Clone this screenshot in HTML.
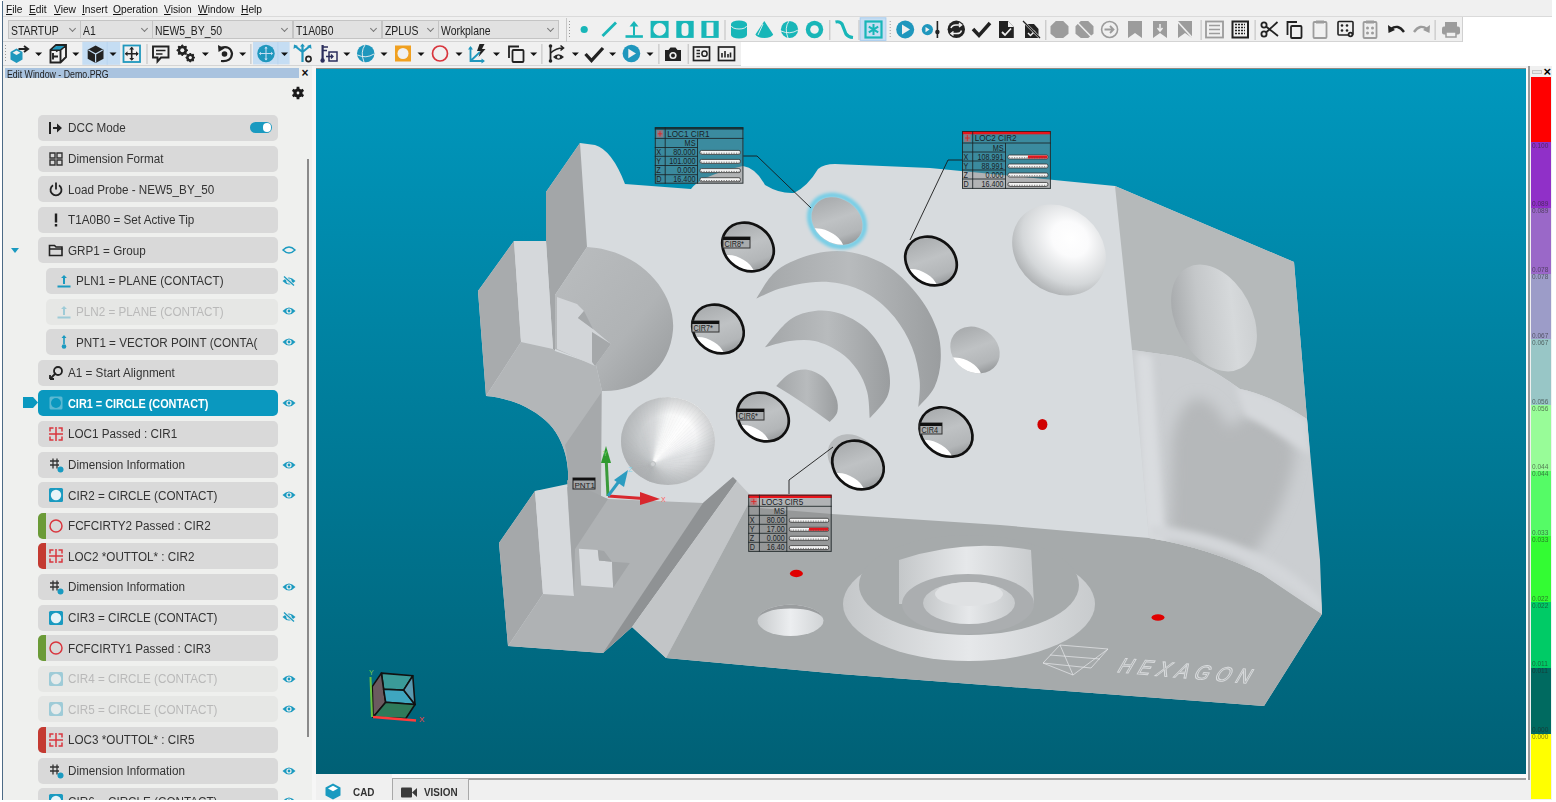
<!DOCTYPE html><html><head><meta charset="utf-8"><style>
*{box-sizing:border-box}
html{width:1556px;height:802px;overflow:hidden}
body{margin:0;width:1556px;height:802px;position:relative;overflow:hidden;background:#fff;font-family:"Liberation Sans",sans-serif;color:#222}
.a{position:absolute}
#root{position:absolute;left:0;top:0;width:1556px;height:802px;overflow:hidden}
#menu{left:3px;top:0;width:1549px;height:17px;background:#f0f0f0;border-bottom:1px solid #dadada}
#menu span{position:absolute;top:3px;font-size:11px;color:#111;white-space:nowrap;transform:scaleX(.93);transform-origin:0 0}
#menu u{text-decoration:underline;text-underline-offset:1px}
#lborder{left:2px;top:1px;width:1px;height:799px;background:#4d6b86}
#tb1{left:3px;top:17px;width:1460px;height:25px;background:#f0f0f0;border-bottom:1px solid #d4d4d4}
#tb2{left:3px;top:42px;width:738px;height:24px;background:#f0f0f0;border-bottom:1px solid #d4d4d4}
.combo{position:absolute;top:3px;height:19px;background:#e1e1e1;border:1px solid #c4c4c4;font-size:13px;color:#222;overflow:hidden}
.combo span{position:absolute;left:2px;top:1.5px;transform:scaleX(.8);transform-origin:0 0;white-space:nowrap}
.combo i{position:absolute;right:5px;top:5px;width:5px;height:5px;border-right:1px solid #777;border-bottom:1px solid #777;transform:rotate(45deg)}
#panel{left:3px;top:66px;width:313px;height:734px;background:#eff0ee}
#ptitle{left:5px;top:68px;width:294px;height:10px;background:#a9c3df;font-size:10px;color:#222;padding-left:1.5px;line-height:11px;white-space:nowrap}
#ptitle span{display:inline-block;transform:scaleX(.88);transform-origin:0 0;position:relative;top:0.5px}
.row{position:absolute;left:38px;width:240px;height:26px;background:#d9d9d9;border-radius:5px;font-size:12.5px;color:#333;white-space:nowrap;overflow:hidden}
.row .t{position:absolute;left:30px;top:6.5px;transform:scaleX(.935);transform-origin:0 0}
.row.ind{left:46px;width:232px}
.row.fade{background:#e6e7e5;color:#b9b9b9}
.row.sel{background:#0a98bf;color:#fff;font-weight:bold}
.row.sel .t{transform:scaleX(.87)}
.bar{position:absolute;left:0;top:0;width:8px;height:26px}
.row svg{position:absolute;left:10px;top:5px}
#vp{left:316px;top:68px;width:1210px;height:706px;background:linear-gradient(#0098be,#006075);border-top:1px solid #8f8a80;overflow:hidden}
#tabs{left:316px;top:774px;width:1212px;height:26px;background:#f0f0f0}
#cbar{left:1528px;top:66px;width:24px;height:734px;background:#f0f0f0}
svg{display:block}
</style></head><body><div id="root">
<div id="lborder" class="a"></div>
<div id="menu" class="a">
<span style="left:3px"><u>F</u>ile</span>
<span style="left:26px"><u>E</u>dit</span>
<span style="left:51px"><u>V</u>iew</span>
<span style="left:79px"><u>I</u>nsert</span>
<span style="left:110px"><u>O</u>peration</span>
<span style="left:161px"><u>V</u>ision</span>
<span style="left:195px"><u>W</u>indow</span>
<span style="left:238px"><u>H</u>elp</span>
</div>
<div id="tb1" class="a">
<div class="combo" style="left:5px;width:73px"><span>STARTUP</span><i></i></div>
<div class="combo" style="left:77px;width:73px"><span>A1</span><i></i></div>
<div class="combo" style="left:149px;width:141px"><span>NEW5_BY_50</span><i></i></div>
<div class="combo" style="left:290px;width:89px"><span>T1A0B0</span><i></i></div>
<div class="combo" style="left:378.5px;width:57px"><span>ZPLUS</span><i></i></div>
<div class="combo" style="left:435px;width:120.5px"><span>Workplane</span><i></i></div>
</div>
<div id="tb2" class="a"></div>
<svg class="a" style="left:0;top:0" width="1556" height="68" viewBox="0 0 1556 68">
<rect x="566" y="18" width="1" height="24" fill="#c8c8c8"/>
<rect x="569" y="21" width="1" height="1" fill="#9a9a9a"/><rect x="569" y="24" width="1" height="1" fill="#9a9a9a"/><rect x="569" y="27" width="1" height="1" fill="#9a9a9a"/><rect x="569" y="30" width="1" height="1" fill="#9a9a9a"/><rect x="569" y="33" width="1" height="1" fill="#9a9a9a"/><rect x="569" y="36" width="1" height="1" fill="#9a9a9a"/>
<circle cx="584.2" cy="29.5" r="3.6" fill="#18b6b8"/>
<path d="M602.5,36 L616,22.5" stroke="#18b6b8" stroke-width="2.8"/>
<rect x="625.5" y="35.2" width="17.4" height="2.6" fill="#18b6b8"/><rect x="633" y="25" width="2" height="10.5" fill="#18b6b8"/><path d="M629.5,26.5 L634,21 L638.5,26.5 Z" fill="#18b6b8"/>
<rect x="650.6" y="20.9" width="18" height="17" fill="#18b6b8"/><circle cx="659.6" cy="29.4" r="6.3" fill="#f0f0f0"/>
<rect x="676.3" y="20.9" width="17.4" height="17" fill="#18b6b8"/><rect x="681.5" y="23" width="7" height="13" rx="3.5" fill="#f0f0f0"/>
<rect x="701.4" y="20.9" width="17.3" height="17" fill="#18b6b8"/><rect x="706.5" y="22.5" width="7" height="13.5" fill="#f0f0f0"/>
<rect x="724.5" y="20" width="1" height="20" fill="#bdbdbd"/>
<path d="M731,24 A8,3.5 0 0 1 747,24 V35 A8,3.5 0 0 1 731,35 Z" fill="#18b6b8"/><path d="M731.5,26 A7.5,3 0 0 0 746.5,26" stroke="#f0f0f0" stroke-width="0.9" fill="none"/>
<path d="M764.3,21 L773.2,34.5 A9,4 0 0 1 755.4,34.5 Z" fill="#18b6b8"/><path d="M763,24 L758,35" stroke="#f0f0f0" stroke-width="0.9"/>
<circle cx="789.5" cy="29.5" r="8.6" fill="#18b6b8"/><path d="M781,31 Q790,35 798,30 M789,21 Q784,28 788,38" stroke="#f0f0f0" stroke-width="0.9" fill="none"/>
<circle cx="814.5" cy="29.5" r="8.7" fill="#18b6b8"/><circle cx="814.5" cy="29.5" r="4.3" fill="#f0f0f0"/>
<rect x="829.3" y="20" width="1" height="20" fill="#bdbdbd"/>
<path d="M835.5,22 Q840,21 842,24 L846,34 Q848,37 853,37.5" stroke="#18b6b8" stroke-width="3.2" fill="none"/>
<rect x="858.5" y="20" width="1" height="20" fill="#bdbdbd"/>
<rect x="860.2" y="17.8" width="25.7" height="22.6" fill="#c7def3" stroke="#a9cdee" stroke-width="1"/>
<rect x="865.5" y="21.5" width="16" height="16" fill="none" stroke="#18b6b8" stroke-width="2.2"/><path d="M873.5,24 V35 M868.8,26.7 L878.2,32.3 M878.2,26.7 L868.8,32.3" stroke="#18b6b8" stroke-width="2"/>
<rect x="889.7" y="21" width="1" height="1" fill="#9a9a9a"/><rect x="889.7" y="24" width="1" height="1" fill="#9a9a9a"/><rect x="889.7" y="27" width="1" height="1" fill="#9a9a9a"/><rect x="889.7" y="30" width="1" height="1" fill="#9a9a9a"/><rect x="889.7" y="33" width="1" height="1" fill="#9a9a9a"/><rect x="889.7" y="36" width="1" height="1" fill="#9a9a9a"/>
<circle cx="905.2" cy="29.5" r="9" fill="#1f97bd"/><path d="M902,24.5 L910,29.5 L902,34.5 Z" fill="#f0f0f0"/>
<circle cx="927.4" cy="29.6" r="5.6" fill="#1f97bd"/><path d="M925.5,27 L929.5,29.6 L925.5,32.2 Z" fill="#f0f0f0"/><rect x="936.6" y="21" width="1.6" height="17" fill="#222222"/><circle cx="937.4" cy="32" r="2.2" fill="#222222"/>
<circle cx="956.3" cy="29.3" r="8.7" fill="#222222"/><path d="M951,28 Q952,24.5 957,25 H961 M959,23 L961.5,25 L959,27 M961.5,30.5 Q960.5,34 955.5,33.5 H951 M953.5,31.5 L951,33.5 L953.5,35.5" stroke="#f0f0f0" stroke-width="1.5" fill="none"/>
<path d="M973,29 L979,35.5 L990,23" stroke="#222222" stroke-width="3.5" fill="none"/>
<path d="M999,21 H1008 L1013.8,27 V38 H999 Z" fill="#222222"/><path d="M1008,21 V27 H1013.8" fill="#f0f0f0"/><path d="M1002,32 L1005,35 L1011,28.5" stroke="#f0f0f0" stroke-width="1.8" fill="none"/>
<path d="M1025,24 H1034 L1038.5,29 V38 H1025 Z" fill="#222222"/><path d="M1028,33 L1030.5,35.5 L1035,31" stroke="#f0f0f0" stroke-width="1.5" fill="none"/><path d="M1023,21 L1040,38" stroke="#f0f0f0" stroke-width="2.4"/><path d="M1023,21 L1040,38" stroke="#222222" stroke-width="1.3"/>
<rect x="1045.3" y="20" width="1" height="20" fill="#bdbdbd"/>
<path d="M1055.8,21 H1063.2 L1068.5,26.3 V33.7 L1063.2,38 H1055.8 L1050.5,33.7 V26.3 Z" fill="#9c9c9c"/>
<path d="M1080.8,21 H1088.2 L1093.5,26.3 V33.7 L1088.2,38 H1080.8 L1075.5,33.7 V26.3 Z" fill="#9c9c9c"/><path d="M1076,21 L1093,38.5" stroke="#f0f0f0" stroke-width="1.5"/>
<circle cx="1109.6" cy="29.5" r="8" fill="none" stroke="#9c9c9c" stroke-width="1.6"/><path d="M1104.5,29.5 H1113 M1110,26 L1113.5,29.5 L1110,33" stroke="#9c9c9c" stroke-width="1.8" fill="none"/>
<path d="M1128,21 H1142 V38 L1135,33 L1128,38 Z" fill="#9c9c9c"/>
<path d="M1153,21 H1167 V38 L1160,33 L1153,38 Z" fill="#9c9c9c"/><path d="M1160,24 V30 M1157.5,28 L1160,31 L1162.5,28" stroke="#f0f0f0" stroke-width="1.5" fill="none"/>
<path d="M1178,21 H1192 V38 L1185,33 L1178,38 Z" fill="#9c9c9c"/><path d="M1177,21 L1193,38.5" stroke="#f0f0f0" stroke-width="1.6"/>
<rect x="1200.6" y="20" width="1" height="20" fill="#bdbdbd"/>
<rect x="1206" y="21.5" width="17" height="16" fill="none" stroke="#9c9c9c" stroke-width="1.8"/><path d="M1209,25.5 H1220 M1209,29.5 H1220 M1209,33.5 H1220" stroke="#9c9c9c" stroke-width="1.6"/>
<rect x="1232.5" y="21.5" width="15.5" height="16" fill="none" stroke="#222222" stroke-width="2"/><path d="M1235,24.5 H1245 M1235,27.5 H1245 M1235,30.5 H1245 M1235,33.5 H1245" stroke="#222222" stroke-width="1.4" stroke-dasharray="2 1"/>
<rect x="1254.6" y="20" width="1" height="20" fill="#bdbdbd"/>
<circle cx="1264" cy="25" r="2.6" fill="none" stroke="#222222" stroke-width="1.8"/><circle cx="1264" cy="34" r="2.6" fill="none" stroke="#222222" stroke-width="1.8"/><path d="M1266,26.5 L1278,36 M1266,32.5 L1277.5,22" stroke="#222222" stroke-width="1.8"/>
<path d="M1287.5,35 V22 H1297" fill="none" stroke="#222222" stroke-width="1.8"/><rect x="1291" y="26" width="10.5" height="12" rx="1" fill="none" stroke="#222222" stroke-width="1.8"/>
<rect x="1313.5" y="22" width="13" height="16" rx="1" fill="none" stroke="#9c9c9c" stroke-width="1.8"/><rect x="1316" y="20.5" width="8" height="3" fill="#9c9c9c"/>
<rect x="1338" y="21.5" width="15" height="13.5" rx="1" fill="none" stroke="#222222" stroke-width="1.6"/><circle cx="1342" cy="25.5" r="1.3" fill="#222222"/><circle cx="1347" cy="25.5" r="1.3" fill="#222222"/><circle cx="1342" cy="30.5" r="1.3" fill="#222222"/><circle cx="1347" cy="30.5" r="1.3" fill="#222222"/><circle cx="1350.5" cy="34.5" r="2.8" fill="#222222"/><circle cx="1350.5" cy="34.5" r="1" fill="#f0f0f0"/>
<rect x="1363.5" y="22" width="13" height="16" rx="1" fill="none" stroke="#9c9c9c" stroke-width="1.8"/><rect x="1366" y="20.5" width="8" height="3" fill="#9c9c9c"/><circle cx="1367.5" cy="28" r="1.5" fill="#9c9c9c"/><circle cx="1372.5" cy="28" r="1.5" fill="#9c9c9c"/><circle cx="1367.5" cy="33" r="1.5" fill="#9c9c9c"/><circle cx="1372.5" cy="33" r="1.5" fill="#9c9c9c"/>
<path d="M1391,29 Q1398,23.5 1404,32" stroke="#222222" stroke-width="2.4" fill="none"/><path d="M1388,25 L1388.5,33 L1395,30 Z" fill="#222222"/>
<path d="M1427,29 Q1420,23.5 1414,32" stroke="#9c9c9c" stroke-width="2.4" fill="none"/><path d="M1430,25 L1429.5,33 L1423,30 Z" fill="#9c9c9c"/>
<rect x="1434.6" y="20" width="1" height="20" fill="#bdbdbd"/>
<rect x="1445" y="22" width="12" height="5" fill="#9c9c9c"/><rect x="1442" y="26.5" width="18" height="8" rx="2" fill="#9c9c9c"/><rect x="1446" y="32" width="10" height="5" fill="#f0f0f0" stroke="#9c9c9c" stroke-width="1.5"/>
<rect x="1462" y="17" width="1" height="25" fill="#d0d0d0"/>
<rect x="5" y="45" width="1" height="1" fill="#9a9a9a"/><rect x="5" y="48" width="1" height="1" fill="#9a9a9a"/><rect x="5" y="51" width="1" height="1" fill="#9a9a9a"/><rect x="5" y="54" width="1" height="1" fill="#9a9a9a"/><rect x="5" y="57" width="1" height="1" fill="#9a9a9a"/><rect x="5" y="60" width="1" height="1" fill="#9a9a9a"/>
<path d="M10.5,52 L16.5,48.5 L22.5,52 V59.5 L16.5,63 L10.5,59.5 Z" fill="#1f97bd"/><path d="M16.5,50.5 L20.5,52.8 L16.5,55 L12.5,52.8 Z" fill="#f0f0f0"/><path d="M18.5,49 H27 M24,46 L28,49 L24,52" stroke="#222222" stroke-width="2" fill="none"/>
<path d="M35.1,52.5 L42.1,52.5 L38.6,56 Z" fill="#111"/>
<path d="M50.5,50 L56,45 H66 V57 L60.5,62.5 H50.5 Z M50.5,50 H60.5 V62.5 M60.5,50 L66,45 M53,53 V59.5 M53,56.5 H58 M56,51.5 L63,46" fill="none" stroke="#222222" stroke-width="1.9"/><path d="M52,49.5 L56.5,46 H64.5 L60,49.5 Z" fill="#1f97bd"/>
<path d="M72.3,52.5 L79.3,52.5 L75.8,56 Z" fill="#111"/>
<rect x="82.3" y="41.8" width="37.9" height="23" fill="#c5ddf3"/><rect x="106.7" y="41.8" width="1" height="23" fill="#b8d4ef"/>
<path d="M95.6,45.5 L103.5,49.8 V58.7 L95.6,63 L87.7,58.7 V49.8 Z" fill="#222222"/><path d="M88.5,50 L95.6,54 L102.7,50 M95.6,54 V62.5" stroke="#c5ddf3" stroke-width="1.2" fill="none"/>
<path d="M109.5,52.5 L116.5,52.5 L113,56 Z" fill="#111"/>
<rect x="123.5" y="45.5" width="16.5" height="16.5" fill="none" stroke="#1f97bd" stroke-width="1.8"/><path d="M131.7,47.5 V60 M125.5,53.7 H138" stroke="#222222" stroke-width="1.6"/><path d="M129.2,49.5 L131.7,46.8 L134.2,49.5 Z M129.2,58 L131.7,60.7 L134.2,58 Z M127.5,51.2 L124.8,53.7 L127.5,56.2 Z M136,51.2 L138.7,53.7 L136,56.2 Z" fill="#222222"/>
<rect x="146.5" y="44" width="1" height="20" fill="#bdbdbd"/>
<path d="M153,46.5 H168.5 V57.5 H161 L157.5,61.5 V57.5 H153 Z" fill="none" stroke="#222222" stroke-width="1.9"/><path d="M156,50.5 H165.5 M156,54 H162.5" stroke="#222222" stroke-width="1.5"/>
<path d="M187.9,50.3 L186.0,51.8 L186.3,54.3 L183.8,54.0 L182.3,55.9 L180.8,54.0 L178.3,54.3 L178.6,51.8 L176.7,50.3 L178.6,48.8 L178.3,46.3 L180.8,46.6 L182.3,44.7 L183.8,46.6 L186.3,46.3 L186.0,48.8Z" fill="#222222" stroke="#222222" stroke-width="1" stroke-linejoin="round"/><circle cx="182.3" cy="50.3" r="2.0" fill="#f0f0f0"/><path d="M194.9,57.6 L193.4,58.9 L193.6,60.9 L191.6,60.7 L190.3,62.2 L189.0,60.7 L187.0,60.9 L187.2,58.9 L185.7,57.6 L187.2,56.3 L187.0,54.3 L189.0,54.5 L190.3,53.0 L191.6,54.5 L193.6,54.3 L193.4,56.3Z" fill="#222222" stroke="#222222" stroke-width="1" stroke-linejoin="round"/><circle cx="190.3" cy="57.6" r="1.6" fill="#f0f0f0"/>
<path d="M201.9,52.5 L208.9,52.5 L205.4,56 Z" fill="#111"/>
<path d="M220.5,48 Q230.5,45 232,53.5 Q231.5,62 221,61" stroke="#222222" stroke-width="2.2" fill="none"/><path d="M218,45 L218.5,52 L224.5,48.5 Z" fill="#222222"/><circle cx="224.5" cy="54" r="2.8" fill="#222222"/>
<path d="M239.2,52.5 L246.2,52.5 L242.7,56 Z" fill="#111"/>
<rect x="250.4" y="44" width="1" height="20" fill="#bdbdbd"/>
<rect x="253" y="42" width="36.6" height="22.4" fill="#c5ddf3"/><rect x="277.4" y="42" width="1" height="22.4" fill="#b8d4ef"/>
<circle cx="266" cy="53.5" r="8.7" fill="#1f97bd"/><path d="M266,47 V60 M259.5,53.5 H272.5" stroke="#c5ddf3" stroke-width="1.1"/><path d="M264.3,48.5 L266,46.5 L267.7,48.5 Z M264.3,58.5 L266,60.5 L267.7,58.5 Z M261,51.8 L259,53.5 L261,55.2 Z M271,51.8 L273,53.5 L271,55.2 Z" fill="#c5ddf3"/>
<path d="M281.0,52.5 L288.0,52.5 L284.5,56 Z" fill="#111"/>
<path d="M302.5,62 V52 M302.5,52 L295,46 M302.5,52 L310,46 M302.5,52 V45" stroke="#1f97bd" stroke-width="2.2" fill="none"/><path d="M300,46.5 L302.5,43.5 L305,46.5 Z M293.5,49 L294,44.5 L298,46 Z M311.5,49 L311,44.5 L307,46 Z" fill="#1f97bd"/><circle cx="308.5" cy="59" r="2.6" fill="none" stroke="#222222" stroke-width="1.6"/>
<rect x="321.5" y="45" width="2.2" height="14" fill="#2b2e5c"/><circle cx="322.6" cy="60.5" r="2.2" fill="#2b2e5c"/><path d="M323,47 H328 M323,50.5 H327" stroke="#2b2e5c" stroke-width="1.6"/><rect x="329" y="52" width="8" height="9" fill="none" stroke="#2b2e5c" stroke-width="1.5"/><path d="M326,56.5 H333 M331,54.5 L333,56.5 L331,58.5" stroke="#2b2e5c" stroke-width="1.3" fill="none"/>
<path d="M343.3,52.5 L350.3,52.5 L346.8,56 Z" fill="#111"/>
<circle cx="365.7" cy="53.5" r="8.7" fill="#1f97bd"/><path d="M357.5,55 Q366,59 374,54 M365,45 Q360,52 364,62" stroke="#f0f0f0" stroke-width="0.9" fill="none"/>
<path d="M380.5,52.5 L387.5,52.5 L384,56 Z" fill="#111"/>
<rect x="395" y="45.5" width="16" height="16" fill="#f0a020"/><circle cx="403" cy="53.5" r="5.5" fill="#f0f0f0"/>
<path d="M417.5,52.5 L424.5,52.5 L421,56 Z" fill="#111"/>
<circle cx="440" cy="53.5" r="7.5" fill="none" stroke="#d8343c" stroke-width="1.7"/>
<path d="M455.5,52.5 L462.5,52.5 L459,56 Z" fill="#111"/>
<path d="M470.5,47.5 V61 H483.5 M470.5,61 L480,52" stroke="#1f97bd" stroke-width="1.8" fill="none"/><path d="M468,49.5 L470.5,46 L473,49.5 Z M481.5,58.5 L485,61 L481.5,63.5 Z" fill="#1f97bd"/><path d="M479.5,44 L484.5,44 L482,49 L485.5,49 L478.5,57 L480.5,51 L477,51 Z" fill="#222222"/>
<path d="M493.0,52.5 L500.0,52.5 L496.5,56 Z" fill="#111"/>
<path d="M509,58 V46.5 H519" fill="none" stroke="#222222" stroke-width="1.8"/><rect x="512.5" y="50" width="11" height="12" rx="1" fill="none" stroke="#222222" stroke-width="1.8"/>
<path d="M530.2,52.5 L537.2,52.5 L533.7,56 Z" fill="#111"/>
<rect x="541.4" y="44" width="1" height="20" fill="#bdbdbd"/>
<path d="M550.5,46 V61" stroke="#222222" stroke-width="1.8"/><circle cx="550.5" cy="46" r="1.8" fill="#222222"/><circle cx="550.5" cy="61" r="1.8" fill="#222222"/><path d="M550.5,53 Q556,48 563,48 M560.5,45.5 L563.5,48 L560.5,50.5" stroke="#222222" stroke-width="1.6" fill="none"/><path d="M553,57 Q558.5,51.5 564,57 Q558.5,62.5 553,57 Z" fill="#222222"/><circle cx="558.5" cy="57" r="1.5" fill="#f0f0f0"/>
<path d="M571.9,52.5 L578.9,52.5 L575.4,56 Z" fill="#111"/>
<path d="M585.5,54 L591.5,60.5 L603,48" stroke="#222222" stroke-width="3.3" fill="none"/>
<path d="M609.1,52.5 L616.1,52.5 L612.6,56 Z" fill="#111"/>
<circle cx="631.4" cy="53.5" r="8.8" fill="#1f97bd"/><path d="M628.3,48.8 L636,53.5 L628.3,58.2 Z" fill="#f0f0f0"/>
<path d="M646.5,52.5 L653.5,52.5 L650,56 Z" fill="#111"/>
<rect x="658.4" y="44" width="1" height="20" fill="#bdbdbd"/>
<path d="M665,50 H668.5 L670.5,47.5 H675.5 L677.5,50 H681 V61 H665 Z" fill="#222222"/><circle cx="673" cy="55.5" r="3.6" fill="#f0f0f0"/><circle cx="673" cy="55.5" r="2" fill="#222222"/>
<rect x="687.7" y="44" width="1" height="20" fill="#bdbdbd"/>
<rect x="693.5" y="47" width="16" height="13.5" fill="none" stroke="#222222" stroke-width="1.7"/><path d="M696.5,50.5 H700 M696.5,53.5 H700 M696.5,56.5 H700" stroke="#222222" stroke-width="1.3"/><circle cx="704.5" cy="53.7" r="2.6" fill="none" stroke="#222222" stroke-width="1.5"/>
<rect x="718.5" y="47" width="16" height="13.5" fill="none" stroke="#222222" stroke-width="1.7"/><path d="M722,57.5 V53 M725,57.5 V51 M728,57.5 V54 M730.5,57.5 V52.5" stroke="#222222" stroke-width="1.6"/>
</svg>
<div id="panel" class="a"></div>
<div id="ptitle" class="a"><span>Edit Window - Demo.PRG</span></div>
<div class="a" style="left:316px;top:66px;width:1212px;height:2px;background:#f1f1f3"></div>
<div id="vp" class="a"></div>
<svg class="a" style="left:0;top:0" width="1556" height="802" viewBox="0 0 1556 802">
<defs>
<clipPath id="vpc"><rect x="316" y="69" width="1210" height="705"/></clipPath>
<linearGradient id="gcyl" x1="0" y1="0" x2="1" y2="1"><stop offset="0" stop-color="#babdbf"/><stop offset="0.6" stop-color="#b0b3b5"/><stop offset="1" stop-color="#96999b"/></linearGradient>
<linearGradient id="ghole" x1="0" y1="0" x2="1" y2="0.6"><stop offset="0" stop-color="#a0a3a5"/><stop offset="0.55" stop-color="#bfc2c4"/><stop offset="0.85" stop-color="#b3b6b8"/><stop offset="1" stop-color="#9a9d9f"/></linearGradient>
<linearGradient id="gcres" x1="0" y1="0" x2="1" y2="0"><stop offset="0" stop-color="#a3a6a8"/><stop offset="0.5" stop-color="#b8bbbd"/><stop offset="1" stop-color="#9a9d9f"/></linearGradient>
<radialGradient id="gdome" cx="0.5" cy="0.35" r="0.65" fx="0.52" fy="0.3"><stop offset="0" stop-color="#ffffff"/><stop offset="0.3" stop-color="#fbfbfc"/><stop offset="0.75" stop-color="#d4d7d9"/><stop offset="1" stop-color="#aeb1b3"/></radialGradient>
<linearGradient id="gcone" x1="0" y1="0" x2="1" y2="0"><stop offset="0" stop-color="#b5b8ba"/><stop offset="0.45" stop-color="#d8dadc"/><stop offset="0.6" stop-color="#fafafa"/><stop offset="1" stop-color="#d0d2d4"/></linearGradient>
<linearGradient id="grhole" x1="0" y1="0.2" x2="1" y2="0.8"><stop offset="0" stop-color="#a2a5a7"/><stop offset="0.35" stop-color="#c4c7c9"/><stop offset="0.7" stop-color="#d6d9db"/><stop offset="0.92" stop-color="#cdd0d2"/><stop offset="1" stop-color="#9fa2a4"/></linearGradient>
<radialGradient id="gwave" cx="0.45" cy="0.5" r="0.5"><stop offset="0" stop-color="#a9acae"/><stop offset="1" stop-color="#c9ccce" stop-opacity="0"/></radialGradient>
<linearGradient id="gring" x1="0" y1="0" x2="1" y2="0"><stop offset="0" stop-color="#c4c7c9"/><stop offset="0.5" stop-color="#e6e8ea"/><stop offset="1" stop-color="#c8cbcd"/></linearGradient>
<linearGradient id="gsmh" x1="0" y1="0" x2="1" y2="0"><stop offset="0" stop-color="#c8cbcd"/><stop offset="0.5" stop-color="#eceef0"/><stop offset="1" stop-color="#d0d3d5"/></linearGradient>
<filter id="blur8" x="-50%" y="-50%" width="200%" height="200%"><feGaussianBlur stdDeviation="7"/></filter><filter id="blur2" x="-50%" y="-50%" width="200%" height="200%"><feGaussianBlur stdDeviation="1.5"/></filter><filter id="blur3" x="-50%" y="-50%" width="200%" height="200%"><feGaussianBlur stdDeviation="3"/></filter><clipPath id="conec"><ellipse cx="668" cy="441" rx="47" ry="44"/></clipPath><clipPath id="wavec"><path d="M1132,350 L1175,356 Q1200,360 1240,389 Q1270,395 1307,419 L1320,560 L1322,614 Q1300,600 1262,574 Q1210,548 1149,538 Z"/></clipPath><radialGradient id="gconerim" cx="0.5" cy="0.5" r="0.5"><stop offset="0.6" stop-color="#a0a3a5" stop-opacity="0"/><stop offset="1" stop-color="#a0a3a5" stop-opacity="0.45"/></radialGradient></defs>
<g clip-path="url(#vpc)">
<path d="M580,143 L595,145 Q612,150 625,184 L691,189 Q700,176 743,166 Q756,168 765,185 Q780,194 794,193 Q808,186 818,169 Q824,164 835,164 L930,168 L1115,186 L1294,262 L1307,419 L1322,614 L1264,706 L840,674 L666,658 L632,627 L603,653 L508,646 L499,543 L535,491 L568,484 C569,470 567,455 561,442 C555,428 545,418 531,410 C518,402 500,397 486,396 L478,291 L514,241 L546,241 L546,192 Z" fill="#d7dbde"/>
<path d="M580,143 L546,192 L546,241 L553,349 L555,351 L555,295 L587,247 Z" fill="#a3a6a8"/>
<path d="M514,241 L478,291 L486,396 L521,342 Z" fill="#a8abad"/>
<path d="M514,241 L546,241 L553,349 L521,342 Z" fill="#d5d8db"/>
<path d="M521,342 L486,396 C500,397 518,402 531,410 C545,418 555,428 561,442 C567,455 569,470 568,484 L601,499 L602,391 L596,365 L555,351 L553,349 Z" fill="#b3b6b8"/>
<path d="M565,445 L601,393 L601,499 L568,484 C569,470 567,455 565,445 Z" fill="#a6a9ab"/>
<path d="M587,247 C640,250 676,292 673,330 C670,368 640,392 602,391 L596,365 L555,349 L555,295 Z" fill="url(#gcyl)"/>
<path d="M557,297 L577,304 L584,311 L578,318 L593,329 L611,344 L595,366 L557,349 Z" fill="#d2d5d8"/>
<path d="M584,311 L578,318 L593,329 Z M595,366 L611,344 L592,332 L592,362 Z" fill="#a5a8aa"/>
<path d="M499,543 L535,491 L543,594 L508,646 Z" fill="#a5a8aa"/>
<path d="M535,491 L567,487 L574,596 L543,594 Z" fill="#d6d9dc"/>
<path d="M567,487 L608,499 L703,503 L733,477 L632,627 L603,653 L508,646 L543,594 L574,596 Z" fill="#afb2b4"/>
<path d="M567,480 L608,499 L575,549 L574,596 Z" fill="#a2a5a7"/>
<path d="M578.9,548.7 L597.8,549.9 L599,560.6 L612,561.8 L613.2,587.8 L581.2,585.5 Z" fill="#d6d9dc"/>
<path d="M612,561.8 L629.8,563 L613.2,587.8 Z M597.8,549.9 L604,551 L612,561.8 L599,560.6 Z" fill="#a2a5a7"/>
<path d="M703,503 L733,477 L737,481 L632,627 L603,653 Z" fill="#8f9294"/>
<path d="M737,481 L752,497 L666,658 L632,627 Z" fill="#c2c5c7"/>
<path d="M752,497 L760,508 L832,514 L1000,525 L1149,538 Q1210,548 1262,574 L1322,614 L1264,706 L840,674 L666,658 Z" fill="#a6aaab"/>
<path d="M1115,186 L1294,262 L1307,419 Q1270,395 1240,389 Q1200,360 1175,356 L1132,350 Z" fill="#b5b9ba"/>
<path d="M1132,350 L1175,356 Q1200,360 1240,389 Q1270,395 1307,419 L1320,560 L1322,614 Q1300,600 1262,574 Q1210,548 1149,538 Z" fill="#cbced1"/>
<g clip-path="url(#wavec)"><path d="M1170,540 L1172,440 Q1180,400 1198,398 Q1215,400 1228,428 Q1250,410 1270,415 Q1290,430 1295,455 Q1288,500 1262,540 Q1248,560 1240,575 Z" fill="#b5b8ba" filter="url(#blur8)"/><path d="M1136,352 L1152,356 L1165,545 L1145,538 Z" fill="#d9dcdf" filter="url(#blur3)"/><path d="M1235,385 Q1280,398 1307,419 L1310,455 Q1280,435 1245,415 Z" fill="#d5d8db" filter="url(#blur3)"/><path d="M1150,538 Q1210,545 1262,572 Q1300,592 1322,614 L1322,600 Q1300,575 1262,555 Q1210,530 1150,525 Z" fill="#d3d6d9" filter="url(#blur3)"/></g>
<ellipse cx="1214" cy="318" rx="38" ry="57" transform="rotate(-28 1214 318)" fill="url(#grhole)"/>
<ellipse cx="1059" cy="250" rx="50" ry="42" transform="rotate(40 1059 250)" fill="url(#gdome)"/>
<ellipse cx="668" cy="441" rx="47" ry="44" fill="#c3c6c8"/>
<g clip-path="url(#conec)">
<path d="M653.0,464.0 L540.2,505.0 L537.6,496.7 L535.5,488.3Z" fill="#b4b7b9" stroke="#b4b7b9" stroke-width="0.5"/>
<path d="M653.0,464.0 L535.5,488.3 L534.0,479.7 L533.2,471.0Z" fill="#b6b9bb" stroke="#b6b9bb" stroke-width="0.5"/>
<path d="M653.0,464.0 L533.2,471.0 L533.0,462.3 L533.5,453.5Z" fill="#b7babc" stroke="#b7babc" stroke-width="0.5"/>
<path d="M653.0,464.0 L533.5,453.5 L534.5,444.9 L536.2,436.3Z" fill="#b8bbbd" stroke="#b8bbbd" stroke-width="0.5"/>
<path d="M653.0,464.0 L536.2,436.3 L538.6,427.9 L541.5,419.7Z" fill="#babdbf" stroke="#babdbf" stroke-width="0.5"/>
<path d="M653.0,464.0 L541.5,419.7 L545.0,411.7 L549.1,404.0Z" fill="#bbbec0" stroke="#bbbec0" stroke-width="0.5"/>
<path d="M653.0,464.0 L549.1,404.0 L552.7,398.1 L556.7,392.3Z" fill="#bdc0c2" stroke="#bdc0c2" stroke-width="0.5"/>
<path d="M653.0,464.0 L556.7,392.3 L561.1,386.9 L565.7,381.7Z" fill="#bfc2c4" stroke="#bfc2c4" stroke-width="0.5"/>
<path d="M653.0,464.0 L565.7,381.7 L570.7,376.7 L575.9,372.1Z" fill="#c1c4c6" stroke="#c1c4c6" stroke-width="0.5"/>
<path d="M653.0,464.0 L575.9,372.1 L581.3,367.7 L587.1,363.7Z" fill="#c3c6c8" stroke="#c3c6c8" stroke-width="0.5"/>
<path d="M653.0,464.0 L587.1,363.7 L593.0,360.1 L599.1,356.8Z" fill="#c5c8ca" stroke="#c5c8ca" stroke-width="0.5"/>
<path d="M653.0,464.0 L599.1,356.8 L605.5,353.8 L612.0,351.2Z" fill="#c7cacc" stroke="#c7cacc" stroke-width="0.5"/>
<path d="M653.0,464.0 L612.0,351.2 L615.6,350.0 L619.3,348.8Z" fill="#c9ccce" stroke="#c9ccce" stroke-width="0.5"/>
<path d="M653.0,464.0 L619.3,348.8 L623.0,347.8 L626.7,346.9Z" fill="#ccced0" stroke="#ccced0" stroke-width="0.5"/>
<path d="M653.0,464.0 L626.7,346.9 L630.4,346.1 L634.2,345.5Z" fill="#ced1d3" stroke="#ced1d3" stroke-width="0.5"/>
<path d="M653.0,464.0 L634.2,345.5 L638.0,344.9 L641.8,344.5Z" fill="#d1d3d5" stroke="#d1d3d5" stroke-width="0.5"/>
<path d="M653.0,464.0 L641.8,344.5 L645.7,344.2 L649.5,344.1Z" fill="#d4d6d8" stroke="#d4d6d8" stroke-width="0.5"/>
<path d="M653.0,464.0 L649.5,344.1 L653.3,344.0 L657.2,344.1Z" fill="#d6d8da" stroke="#d6d8da" stroke-width="0.5"/>
<path d="M653.0,464.0 L657.2,344.1 L660.0,344.2 L662.8,344.4Z" fill="#dadcde" stroke="#dadcde" stroke-width="0.5"/>
<path d="M653.0,464.0 L662.8,344.4 L665.5,344.7 L668.3,345.0Z" fill="#dfe1e2" stroke="#dfe1e2" stroke-width="0.5"/>
<path d="M653.0,464.0 L668.3,345.0 L671.1,345.4 L673.8,345.8Z" fill="#e4e6e7" stroke="#e4e6e7" stroke-width="0.5"/>
<path d="M653.0,464.0 L673.8,345.8 L676.6,346.3 L679.3,346.9Z" fill="#e9eaeb" stroke="#e9eaeb" stroke-width="0.5"/>
<path d="M653.0,464.0 L679.3,346.9 L682.0,347.6 L684.7,348.3Z" fill="#eeeff0" stroke="#eeeff0" stroke-width="0.5"/>
<path d="M653.0,464.0 L684.7,348.3 L687.4,349.0 L690.1,349.9Z" fill="#f3f4f4" stroke="#f3f4f4" stroke-width="0.5"/>
<path d="M653.0,464.0 L690.1,349.9 L693.4,351.0 L696.7,352.2Z" fill="#f6f7f7" stroke="#f6f7f7" stroke-width="0.5"/>
<path d="M653.0,464.0 L696.7,352.2 L699.9,353.5 L703.1,354.9Z" fill="#f8f8f8" stroke="#f8f8f8" stroke-width="0.5"/>
<path d="M653.0,464.0 L703.1,354.9 L706.2,356.5 L709.3,358.0Z" fill="#f9f9f9" stroke="#f9f9f9" stroke-width="0.5"/>
<path d="M653.0,464.0 L709.3,358.0 L712.4,359.7 L715.4,361.5Z" fill="#fafbfb" stroke="#fafbfb" stroke-width="0.5"/>
<path d="M653.0,464.0 L715.4,361.5 L718.4,363.4 L721.3,365.3Z" fill="#fcfcfc" stroke="#fcfcfc" stroke-width="0.5"/>
<path d="M653.0,464.0 L721.3,365.3 L724.1,367.3 L726.9,369.4Z" fill="#fdfdfd" stroke="#fdfdfd" stroke-width="0.5"/>
<path d="M653.0,464.0 L726.9,369.4 L729.6,371.6 L732.3,373.9Z" fill="#fdfdfd" stroke="#fdfdfd" stroke-width="0.5"/>
<path d="M653.0,464.0 L732.3,373.9 L734.8,376.2 L737.4,378.7Z" fill="#fbfbfb" stroke="#fbfbfb" stroke-width="0.5"/>
<path d="M653.0,464.0 L737.4,378.7 L739.8,381.1 L742.2,383.7Z" fill="#f9f9f9" stroke="#f9f9f9" stroke-width="0.5"/>
<path d="M653.0,464.0 L742.2,383.7 L744.5,386.3 L746.7,389.0Z" fill="#f7f7f8" stroke="#f7f7f8" stroke-width="0.5"/>
<path d="M653.0,464.0 L746.7,389.0 L748.8,391.8 L750.9,394.6Z" fill="#f5f5f6" stroke="#f5f5f6" stroke-width="0.5"/>
<path d="M653.0,464.0 L750.9,394.6 L752.9,397.5 L754.8,400.4Z" fill="#f3f3f4" stroke="#f3f3f4" stroke-width="0.5"/>
<path d="M653.0,464.0 L754.8,400.4 L756.3,402.9 L757.8,405.5Z" fill="#f0f1f2" stroke="#f0f1f2" stroke-width="0.5"/>
<path d="M653.0,464.0 L757.8,405.5 L759.2,408.1 L760.5,410.8Z" fill="#edeeef" stroke="#edeeef" stroke-width="0.5"/>
<path d="M653.0,464.0 L760.5,410.8 L761.8,413.4 L763.0,416.2Z" fill="#e9ebec" stroke="#e9ebec" stroke-width="0.5"/>
<path d="M653.0,464.0 L763.0,416.2 L764.2,418.9 L765.3,421.6Z" fill="#e6e7e9" stroke="#e6e7e9" stroke-width="0.5"/>
<path d="M653.0,464.0 L765.3,421.6 L766.3,424.4 L767.2,427.3Z" fill="#e3e4e6" stroke="#e3e4e6" stroke-width="0.5"/>
<path d="M653.0,464.0 L767.2,427.3 L768.1,430.1 L768.9,432.9Z" fill="#dfe1e3" stroke="#dfe1e3" stroke-width="0.5"/>
<path d="M653.0,464.0 L768.9,432.9 L770.3,438.9 L771.5,444.9Z" fill="#dddfe1" stroke="#dddfe1" stroke-width="0.5"/>
<path d="M653.0,464.0 L771.5,444.9 L772.3,450.9 L772.8,457.0Z" fill="#dbdddf" stroke="#dbdddf" stroke-width="0.5"/>
<path d="M653.0,464.0 L772.8,457.0 L773.0,463.1 L772.9,469.2Z" fill="#d9dbdd" stroke="#d9dbdd" stroke-width="0.5"/>
<path d="M653.0,464.0 L772.9,469.2 L772.5,475.3 L771.7,481.4Z" fill="#d7d9db" stroke="#d7d9db" stroke-width="0.5"/>
<path d="M653.0,464.0 L771.7,481.4 L770.7,487.4 L769.4,493.4Z" fill="#d5d7d9" stroke="#d5d7d9" stroke-width="0.5"/>
<path d="M653.0,464.0 L769.4,493.4 L767.7,499.3 L765.8,505.0Z" fill="#d3d5d7" stroke="#d3d5d7" stroke-width="0.5"/>
<path d="M653.0,464.0 L765.8,505.0 L763.2,511.5 L760.2,517.9Z" fill="#d0d3d5" stroke="#d0d3d5" stroke-width="0.5"/>
<path d="M653.0,464.0 L760.2,517.9 L756.9,524.0 L753.3,529.9Z" fill="#ced1d3" stroke="#ced1d3" stroke-width="0.5"/>
<path d="M653.0,464.0 L753.3,529.9 L749.3,535.7 L744.9,541.1Z" fill="#cbced0" stroke="#cbced0" stroke-width="0.5"/>
<path d="M653.0,464.0 L744.9,541.1 L740.3,546.3 L735.3,551.3Z" fill="#c8cbcd" stroke="#c8cbcd" stroke-width="0.5"/>
<path d="M653.0,464.0 L735.3,551.3 L730.1,555.9 L724.7,560.3Z" fill="#c6c9cb" stroke="#c6c9cb" stroke-width="0.5"/>
<path d="M653.0,464.0 L724.7,560.3 L718.9,564.3 L713.0,567.9Z" fill="#c3c6c8" stroke="#c3c6c8" stroke-width="0.5"/>
<path d="M653.0,464.0 L713.0,567.9 L705.3,572.0 L697.3,575.5Z" fill="#c0c3c5" stroke="#c0c3c5" stroke-width="0.5"/>
<path d="M653.0,464.0 L697.3,575.5 L689.1,578.4 L680.7,580.8Z" fill="#bec1c3" stroke="#bec1c3" stroke-width="0.5"/>
<path d="M653.0,464.0 L680.7,580.8 L672.1,582.5 L663.5,583.5Z" fill="#bcbfc1" stroke="#bcbfc1" stroke-width="0.5"/>
<path d="M653.0,464.0 L663.5,583.5 L654.7,584.0 L646.0,583.8Z" fill="#b9bcbe" stroke="#b9bcbe" stroke-width="0.5"/>
<path d="M653.0,464.0 L646.0,583.8 L637.3,583.0 L628.7,581.5Z" fill="#b7babc" stroke="#b7babc" stroke-width="0.5"/>
<path d="M653.0,464.0 L628.7,581.5 L620.3,579.4 L612.0,576.8Z" fill="#b5b8ba" stroke="#b5b8ba" stroke-width="0.5"/>
<path d="M653.0,464.0 L612.0,576.8 L603.9,573.5 L596.0,569.6Z" fill="#b4b7b9" stroke="#b4b7b9" stroke-width="0.5"/>
<path d="M653.0,464.0 L596.0,569.6 L588.5,565.2 L581.3,560.3Z" fill="#b4b7b9" stroke="#b4b7b9" stroke-width="0.5"/>
<path d="M653.0,464.0 L581.3,560.3 L574.5,554.8 L568.1,548.9Z" fill="#b4b7b9" stroke="#b4b7b9" stroke-width="0.5"/>
<path d="M653.0,464.0 L568.1,548.9 L562.2,542.5 L556.7,535.7Z" fill="#b4b7b9" stroke="#b4b7b9" stroke-width="0.5"/>
<path d="M653.0,464.0 L556.7,535.7 L551.8,528.5 L547.4,521.0Z" fill="#b4b7b9" stroke="#b4b7b9" stroke-width="0.5"/>
<path d="M653.0,464.0 L547.4,521.0 L543.5,513.1 L540.2,505.0Z" fill="#b4b7b9" stroke="#b4b7b9" stroke-width="0.5"/>
<ellipse cx="668" cy="441" rx="47" ry="44" fill="url(#gconerim)"/>
</g>
<circle cx="653" cy="464" r="2.5" fill="#d0d2d4" stroke="#b8bbbd" stroke-width="0.8"/>
<path d="M756.2,298.6 C759.7,293.8 767.6,277.5 777.4,270.0 C787.2,262.5 802.3,256.6 814.8,253.7 C827.3,250.8 839.7,250.2 852.2,252.5 C864.7,254.8 878.4,259.9 889.6,267.4 C900.8,274.9 911.7,287.0 919.6,297.4 C927.5,307.8 933.5,319.4 937.0,329.8 C940.5,340.2 941.1,350.2 940.7,359.7 C940.3,369.2 938.2,379.1 934.5,387.0 C930.8,394.9 921.0,403.7 918.3,407.0  C918.5,402.4 920.6,389.7 919.6,379.7 C918.6,369.7 916.2,357.6 912.0,347.2 C907.8,336.8 901.6,326.0 894.6,317.3 C887.6,308.6 878.8,300.5 869.7,294.9 C860.6,289.3 849.8,285.7 839.8,283.6 C829.8,281.5 819.8,281.6 809.8,282.4 C799.8,283.2 788.9,285.9 780.0,288.6 C771.1,291.3 760.2,296.9 756.2,298.6 Z" fill="url(#gcres)"/>
<path d="M765,347.2 C769.1,342.6 781.6,325.8 789.9,319.8 C798.2,313.8 806.5,312.0 814.8,311.0 C823.1,310.0 831.5,310.9 839.8,313.6 C848.1,316.3 857.7,321.3 864.7,327.3 C871.8,333.3 878.0,341.8 882.1,349.7 C886.2,357.6 888.8,366.8 889.6,374.7 C890.4,382.6 890.4,389.7 887.1,397.0 C883.8,404.3 872.6,414.8 869.7,418.3  C869.3,413.9 869.3,400.1 867.2,392.0 C865.1,383.9 861.8,376.3 857.2,369.7 C852.6,363.1 846.9,357.0 839.8,352.2 C832.7,347.4 823.1,342.9 814.8,341.0 C806.5,339.1 798.2,340.0 789.9,341.0 C781.6,342.0 769.1,346.2 765.0,347.2 Z" fill="url(#gcres)"/>
<path d="M776.2,385.9 C778.5,383.8 784.7,376.1 789.9,373.4 C795.1,370.7 801.5,368.9 807.3,369.7 C813.1,370.5 820.0,373.8 824.8,378.4 C829.6,383.0 833.9,391.5 836.0,397.1 C838.1,402.7 838.3,407.9 837.3,412.0 C836.3,416.1 831.0,420.3 829.8,422.0 Q800,400 776.2,385.9 Z" fill="url(#gcres)"/>
<clipPath id="hc1"><ellipse cx="837" cy="221" rx="27" ry="22" transform="rotate(35 837 221)"/></clipPath>
<ellipse cx="837" cy="221" rx="29" ry="24" transform="rotate(35 837 221)" fill="none" stroke="#74cde6" stroke-width="5" filter="url(#blur2)"/>
<ellipse cx="837" cy="221" rx="27" ry="22" transform="rotate(35 837 221)" fill="url(#ghole)"/>
<g clip-path="url(#hc1)"><ellipse cx="823.5" cy="243.0" rx="21.6" ry="12.8" transform="rotate(25 823.5 243.0)" fill="#ffffff"/></g>
<clipPath id="hc2"><ellipse cx="748" cy="247" rx="27" ry="23" transform="rotate(35 748 247)"/></clipPath>
<ellipse cx="748" cy="247" rx="27" ry="23" transform="rotate(35 748 247)" fill="url(#ghole)"/>
<g clip-path="url(#hc2)"><ellipse cx="734.5" cy="270.0" rx="21.6" ry="13.3" transform="rotate(25 734.5 270.0)" fill="#ffffff"/></g>
<ellipse cx="748" cy="247" rx="27" ry="23" transform="rotate(35 748 247)" fill="none" stroke="#111" stroke-width="2.7"/>
<rect x="723" y="237" width="27" height="11" fill="#a9acae" stroke="#333" stroke-width="1"/>
<rect x="723" y="237" width="27" height="3" fill="#111"/>
<text transform="translate(724.5,246.8) scale(0.85,1)" x="0" y="0" font-size="8.5" fill="#222" text-anchor="start" font-family="Liberation Sans">CIR8*</text>
<clipPath id="hc3"><ellipse cx="931" cy="261" rx="27" ry="23" transform="rotate(35 931 261)"/></clipPath>
<ellipse cx="931" cy="261" rx="27" ry="23" transform="rotate(35 931 261)" fill="url(#ghole)"/>
<g clip-path="url(#hc3)"><ellipse cx="917.5" cy="284.0" rx="21.6" ry="13.3" transform="rotate(25 917.5 284.0)" fill="#ffffff"/></g>
<ellipse cx="931" cy="261" rx="27" ry="23" transform="rotate(35 931 261)" fill="none" stroke="#111" stroke-width="2.7"/>
<clipPath id="hc4"><ellipse cx="718" cy="329" rx="27" ry="23" transform="rotate(35 718 329)"/></clipPath>
<ellipse cx="718" cy="329" rx="27" ry="23" transform="rotate(35 718 329)" fill="url(#ghole)"/>
<g clip-path="url(#hc4)"><ellipse cx="704.5" cy="352.0" rx="21.6" ry="13.3" transform="rotate(25 704.5 352.0)" fill="#ffffff"/></g>
<ellipse cx="718" cy="329" rx="27" ry="23" transform="rotate(35 718 329)" fill="none" stroke="#111" stroke-width="2.7"/>
<rect x="692" y="321" width="27" height="11" fill="#a9acae" stroke="#333" stroke-width="1"/>
<rect x="692" y="321" width="27" height="3" fill="#111"/>
<text transform="translate(693.5,330.8) scale(0.85,1)" x="0" y="0" font-size="8.5" fill="#222" text-anchor="start" font-family="Liberation Sans">CIR7*</text>
<clipPath id="hc5"><ellipse cx="975" cy="350" rx="26" ry="22" transform="rotate(35 975 350)"/></clipPath>
<ellipse cx="975" cy="350" rx="26" ry="22" transform="rotate(35 975 350)" fill="url(#ghole)"/>
<g clip-path="url(#hc5)"><ellipse cx="962.0" cy="372.0" rx="20.8" ry="12.8" transform="rotate(25 962.0 372.0)" fill="#ffffff"/></g>
<clipPath id="hc6"><ellipse cx="763" cy="417" rx="27" ry="23" transform="rotate(35 763 417)"/></clipPath>
<ellipse cx="763" cy="417" rx="27" ry="23" transform="rotate(35 763 417)" fill="url(#ghole)"/>
<g clip-path="url(#hc6)"><ellipse cx="749.5" cy="440.0" rx="21.6" ry="13.3" transform="rotate(25 749.5 440.0)" fill="#ffffff"/></g>
<ellipse cx="763" cy="417" rx="27" ry="23" transform="rotate(35 763 417)" fill="none" stroke="#111" stroke-width="2.7"/>
<rect x="737" y="409" width="27" height="11" fill="#a9acae" stroke="#333" stroke-width="1"/>
<rect x="737" y="409" width="27" height="3" fill="#111"/>
<text transform="translate(738.5,418.8) scale(0.85,1)" x="0" y="0" font-size="8.5" fill="#222" text-anchor="start" font-family="Liberation Sans">CIR6*</text>
<clipPath id="hc7"><ellipse cx="946" cy="432" rx="28" ry="23" transform="rotate(35 946 432)"/></clipPath>
<ellipse cx="946" cy="432" rx="28" ry="23" transform="rotate(35 946 432)" fill="url(#ghole)"/>
<g clip-path="url(#hc7)"><ellipse cx="932.0" cy="455.0" rx="22.4" ry="13.3" transform="rotate(25 932.0 455.0)" fill="#ffffff"/></g>
<ellipse cx="946" cy="432" rx="28" ry="23" transform="rotate(35 946 432)" fill="none" stroke="#111" stroke-width="2.7"/>
<rect x="920" y="423" width="22" height="11" fill="#a9acae" stroke="#333" stroke-width="1"/>
<rect x="920" y="423" width="22" height="3" fill="#111"/>
<text transform="translate(921.5,432.8) scale(0.85,1)" x="0" y="0" font-size="8.5" fill="#222" text-anchor="start" font-family="Liberation Sans">CIR4</text>
<ellipse cx="853" cy="458" rx="27" ry="22" transform="rotate(35 853 458)" fill="#b8bbbd"/>
<clipPath id="hc8"><ellipse cx="858" cy="465" rx="27" ry="23" transform="rotate(35 858 465)"/></clipPath>
<ellipse cx="858" cy="465" rx="27" ry="23" transform="rotate(35 858 465)" fill="url(#ghole)"/>
<g clip-path="url(#hc8)"><ellipse cx="844.5" cy="488.0" rx="21.6" ry="13.3" transform="rotate(25 844.5 488.0)" fill="#ffffff"/></g>
<ellipse cx="858" cy="465" rx="27" ry="23" transform="rotate(35 858 465)" fill="none" stroke="#111" stroke-width="2.7"/>
<path d="M743,156 L757,156 L811,208" fill="none" stroke="#1a1a1a" stroke-width="0.9"/>
<path d="M962,160 L948,160 L910,240" fill="none" stroke="#1a1a1a" stroke-width="0.9"/>
<path d="M789,494 L789,480 L833,447" fill="none" stroke="#1a1a1a" stroke-width="0.9"/>
<rect x="654.8" y="127.2" width="88.60000000000002" height="56.499999999999986" fill="rgb(130,130,130)" fill-opacity="0.45"/>
<rect x="654.8" y="127.2" width="88.60000000000002" height="2.4" fill="#0c2a30" fill-opacity="0.85"/>
<rect x="655.3" y="127.7" width="87.60000000000002" height="55.499999999999986" fill="none" stroke="#1b2326" stroke-opacity="0.85" stroke-width="1"/>
<line x1="654.8" y1="138.4" x2="743.4" y2="138.4" stroke="#1b2326" stroke-opacity="0.85" stroke-width="1"/>
<line x1="654.8" y1="147.5" x2="697.5" y2="147.5" stroke="#1b2326" stroke-opacity="0.85" stroke-width="1"/>
<line x1="654.8" y1="156.3" x2="697.5" y2="156.3" stroke="#1b2326" stroke-opacity="0.85" stroke-width="1"/>
<line x1="654.8" y1="165.5" x2="697.5" y2="165.5" stroke="#1b2326" stroke-opacity="0.85" stroke-width="1"/>
<line x1="654.8" y1="174.7" x2="697.5" y2="174.7" stroke="#1b2326" stroke-opacity="0.85" stroke-width="1"/>
<line x1="665.2" y1="127.2" x2="665.2" y2="183.7" stroke="#1b2326" stroke-opacity="0.85" stroke-width="1"/>
<line x1="697.5" y1="138.4" x2="697.5" y2="183.7" stroke="#1b2326" stroke-opacity="0.85" stroke-width="1"/>
<rect x="656.8" y="130.2" width="6.400000000000091" height="7.200000000000003" fill="#c86a70" fill-opacity="0.6"/><path d="M660.0,131.2 V136.39999999999998 M657.8,133.79999999999998 H662.2" stroke="#e02020" stroke-width="0.8"/>
<text transform="translate(667.2,136.6) scale(0.9,1)" x="0" y="0" font-size="9.1" fill="#1a2226" text-anchor="start" font-family="Liberation Sans">LOC1 CIR1</text>
<text transform="translate(695.5,146.0) scale(0.8,1)" x="0" y="0" font-size="9.1" fill="#1a2226" text-anchor="end" font-family="Liberation Sans">MS</text>
<text transform="translate(656.3,154.8) scale(0.8,1)" x="0" y="0" font-size="9.1" fill="#1a2226" text-anchor="start" font-family="Liberation Sans">X</text>
<text transform="translate(695.5,154.8) scale(0.8,1)" x="0" y="0" font-size="9.1" fill="#1a2226" text-anchor="end" font-family="Liberation Sans">80.000</text>
<rect x="700.0" y="150.4" width="40.39999999999998" height="4" rx="1.5" fill="#f4f4f4" stroke="#333" stroke-width="0.8"/>
<line x1="701.0" y1="153.20000000000002" x2="739.4" y2="153.20000000000002" stroke="#555" stroke-width="0.8" stroke-dasharray="1.2 1.3"/>
<text transform="translate(656.3,164.0) scale(0.8,1)" x="0" y="0" font-size="9.1" fill="#1a2226" text-anchor="start" font-family="Liberation Sans">Y</text>
<text transform="translate(695.5,164.0) scale(0.8,1)" x="0" y="0" font-size="9.1" fill="#1a2226" text-anchor="end" font-family="Liberation Sans">101.000</text>
<rect x="700.0" y="159.4" width="40.39999999999998" height="4" rx="1.5" fill="#f4f4f4" stroke="#333" stroke-width="0.8"/>
<line x1="701.0" y1="162.20000000000002" x2="739.4" y2="162.20000000000002" stroke="#555" stroke-width="0.8" stroke-dasharray="1.2 1.3"/>
<text transform="translate(656.3,173.2) scale(0.8,1)" x="0" y="0" font-size="9.1" fill="#1a2226" text-anchor="start" font-family="Liberation Sans">Z</text>
<text transform="translate(695.5,173.2) scale(0.8,1)" x="0" y="0" font-size="9.1" fill="#1a2226" text-anchor="end" font-family="Liberation Sans">0.000</text>
<rect x="700.0" y="168.6" width="40.39999999999998" height="4" rx="1.5" fill="#f4f4f4" stroke="#333" stroke-width="0.8"/>
<line x1="701.0" y1="171.4" x2="739.4" y2="171.4" stroke="#555" stroke-width="0.8" stroke-dasharray="1.2 1.3"/>
<text transform="translate(656.3,182.2) scale(0.8,1)" x="0" y="0" font-size="9.1" fill="#1a2226" text-anchor="start" font-family="Liberation Sans">D</text>
<text transform="translate(695.5,182.2) scale(0.8,1)" x="0" y="0" font-size="9.1" fill="#1a2226" text-anchor="end" font-family="Liberation Sans">16.400</text>
<rect x="700.0" y="177.7" width="40.39999999999998" height="4" rx="1.5" fill="#f4f4f4" stroke="#333" stroke-width="0.8"/>
<line x1="701.0" y1="180.5" x2="739.4" y2="180.5" stroke="#555" stroke-width="0.8" stroke-dasharray="1.2 1.3"/>
<rect x="962" y="131" width="88.90000000000009" height="57.900000000000006" fill="rgb(130,130,130)" fill-opacity="0.45"/>
<rect x="962" y="131" width="88.90000000000009" height="3.3" fill="#e8141b"/>
<rect x="962.5" y="131.5" width="87.90000000000009" height="56.900000000000006" fill="none" stroke="#1b2326" stroke-opacity="0.85" stroke-width="1"/>
<line x1="962" y1="143" x2="1050.9" y2="143" stroke="#1b2326" stroke-opacity="0.85" stroke-width="1"/>
<line x1="962" y1="152" x2="1005.5" y2="152" stroke="#1b2326" stroke-opacity="0.85" stroke-width="1"/>
<line x1="962" y1="161" x2="1005.5" y2="161" stroke="#1b2326" stroke-opacity="0.85" stroke-width="1"/>
<line x1="962" y1="170" x2="1005.5" y2="170" stroke="#1b2326" stroke-opacity="0.85" stroke-width="1"/>
<line x1="962" y1="179" x2="1005.5" y2="179" stroke="#1b2326" stroke-opacity="0.85" stroke-width="1"/>
<line x1="972.7" y1="131" x2="972.7" y2="188.9" stroke="#1b2326" stroke-opacity="0.85" stroke-width="1"/>
<line x1="1005.5" y1="143" x2="1005.5" y2="188.9" stroke="#1b2326" stroke-opacity="0.85" stroke-width="1"/>
<rect x="964" y="134" width="6.7000000000000455" height="8" fill="#c86a70" fill-opacity="0.6"/><path d="M967.35,135 V141 M965,138.0 H969.7" stroke="#e02020" stroke-width="0.8"/>
<text transform="translate(974.7,141.2) scale(0.9,1)" x="0" y="0" font-size="9.0" fill="#1a2226" text-anchor="start" font-family="Liberation Sans">LOC2 CIR2</text>
<text transform="translate(1003.5,150.5) scale(0.8,1)" x="0" y="0" font-size="9.0" fill="#1a2226" text-anchor="end" font-family="Liberation Sans">MS</text>
<text transform="translate(963.5,159.5) scale(0.8,1)" x="0" y="0" font-size="9.0" fill="#1a2226" text-anchor="start" font-family="Liberation Sans">X</text>
<text transform="translate(1003.5,159.5) scale(0.8,1)" x="0" y="0" font-size="9.0" fill="#1a2226" text-anchor="end" font-family="Liberation Sans">108.991</text>
<rect x="1008.0" y="155.0" width="39.90000000000009" height="4" rx="1.5" fill="#f4f4f4" stroke="#333" stroke-width="0.8"/>
<rect x="1027.95" y="155.5" width="19.450000000000045" height="3" fill="#e8141b"/>
<line x1="1009.0" y1="157.8" x2="1046.9" y2="157.8" stroke="#555" stroke-width="0.8" stroke-dasharray="1.2 1.3"/>
<text transform="translate(963.5,168.5) scale(0.8,1)" x="0" y="0" font-size="9.0" fill="#1a2226" text-anchor="start" font-family="Liberation Sans">Y</text>
<text transform="translate(1003.5,168.5) scale(0.8,1)" x="0" y="0" font-size="9.0" fill="#1a2226" text-anchor="end" font-family="Liberation Sans">88.991</text>
<rect x="1008.0" y="164.0" width="39.90000000000009" height="4" rx="1.5" fill="#f4f4f4" stroke="#333" stroke-width="0.8"/>
<line x1="1009.0" y1="166.8" x2="1046.9" y2="166.8" stroke="#555" stroke-width="0.8" stroke-dasharray="1.2 1.3"/>
<text transform="translate(963.5,177.5) scale(0.8,1)" x="0" y="0" font-size="9.0" fill="#1a2226" text-anchor="start" font-family="Liberation Sans">Z</text>
<text transform="translate(1003.5,177.5) scale(0.8,1)" x="0" y="0" font-size="9.0" fill="#1a2226" text-anchor="end" font-family="Liberation Sans">0.000</text>
<rect x="1008.0" y="173.0" width="39.90000000000009" height="4" rx="1.5" fill="#f4f4f4" stroke="#333" stroke-width="0.8"/>
<line x1="1009.0" y1="175.8" x2="1046.9" y2="175.8" stroke="#555" stroke-width="0.8" stroke-dasharray="1.2 1.3"/>
<text transform="translate(963.5,187.4) scale(0.8,1)" x="0" y="0" font-size="9.0" fill="#1a2226" text-anchor="start" font-family="Liberation Sans">D</text>
<text transform="translate(1003.5,187.4) scale(0.8,1)" x="0" y="0" font-size="9.0" fill="#1a2226" text-anchor="end" font-family="Liberation Sans">16.400</text>
<rect x="1008.0" y="182.45" width="39.90000000000009" height="4" rx="1.5" fill="#f4f4f4" stroke="#333" stroke-width="0.8"/>
<line x1="1009.0" y1="185.25" x2="1046.9" y2="185.25" stroke="#555" stroke-width="0.8" stroke-dasharray="1.2 1.3"/>
<rect x="748.2" y="494.7" width="83.5" height="57.19999999999999" fill="rgb(130,130,130)" fill-opacity="0.45"/>
<rect x="748.2" y="494.7" width="83.5" height="3.3" fill="#e8141b"/>
<rect x="748.7" y="495.2" width="82.5" height="56.19999999999999" fill="none" stroke="#1b2326" stroke-opacity="0.85" stroke-width="1"/>
<line x1="748.2" y1="506.3" x2="831.7" y2="506.3" stroke="#1b2326" stroke-opacity="0.85" stroke-width="1"/>
<line x1="748.2" y1="515.3" x2="786.8" y2="515.3" stroke="#1b2326" stroke-opacity="0.85" stroke-width="1"/>
<line x1="748.2" y1="524.3" x2="786.8" y2="524.3" stroke="#1b2326" stroke-opacity="0.85" stroke-width="1"/>
<line x1="748.2" y1="533.3" x2="786.8" y2="533.3" stroke="#1b2326" stroke-opacity="0.85" stroke-width="1"/>
<line x1="748.2" y1="542.3" x2="786.8" y2="542.3" stroke="#1b2326" stroke-opacity="0.85" stroke-width="1"/>
<line x1="759.4" y1="494.7" x2="759.4" y2="551.9" stroke="#1b2326" stroke-opacity="0.85" stroke-width="1"/>
<line x1="786.8" y1="506.3" x2="786.8" y2="551.9" stroke="#1b2326" stroke-opacity="0.85" stroke-width="1"/>
<rect x="750.2" y="497.7" width="7.199999999999932" height="7.600000000000023" fill="#c86a70" fill-opacity="0.6"/><path d="M753.8,498.7 V504.3 M751.2,501.5 H756.4" stroke="#e02020" stroke-width="0.8"/>
<text transform="translate(761.4,504.5) scale(0.9,1)" x="0" y="0" font-size="9.0" fill="#1a2226" text-anchor="start" font-family="Liberation Sans">LOC3 CIR5</text>
<text transform="translate(784.8,513.8) scale(0.8,1)" x="0" y="0" font-size="9.0" fill="#1a2226" text-anchor="end" font-family="Liberation Sans">MS</text>
<text transform="translate(749.7,522.8) scale(0.8,1)" x="0" y="0" font-size="9.0" fill="#1a2226" text-anchor="start" font-family="Liberation Sans">X</text>
<text transform="translate(784.8,522.8) scale(0.8,1)" x="0" y="0" font-size="9.0" fill="#1a2226" text-anchor="end" font-family="Liberation Sans">80.00</text>
<rect x="789.3" y="518.3" width="39.40000000000009" height="4" rx="1.5" fill="#f4f4f4" stroke="#333" stroke-width="0.8"/>
<line x1="790.3" y1="521.0999999999999" x2="827.7" y2="521.0999999999999" stroke="#555" stroke-width="0.8" stroke-dasharray="1.2 1.3"/>
<text transform="translate(749.7,531.8) scale(0.8,1)" x="0" y="0" font-size="9.0" fill="#1a2226" text-anchor="start" font-family="Liberation Sans">Y</text>
<text transform="translate(784.8,531.8) scale(0.8,1)" x="0" y="0" font-size="9.0" fill="#1a2226" text-anchor="end" font-family="Liberation Sans">17.00</text>
<rect x="789.3" y="527.3" width="39.40000000000009" height="4" rx="1.5" fill="#f4f4f4" stroke="#333" stroke-width="0.8"/>
<rect x="809.0" y="527.8" width="19.200000000000045" height="3" fill="#e8141b"/>
<line x1="790.3" y1="530.0999999999999" x2="827.7" y2="530.0999999999999" stroke="#555" stroke-width="0.8" stroke-dasharray="1.2 1.3"/>
<text transform="translate(749.7,540.8) scale(0.8,1)" x="0" y="0" font-size="9.0" fill="#1a2226" text-anchor="start" font-family="Liberation Sans">Z</text>
<text transform="translate(784.8,540.8) scale(0.8,1)" x="0" y="0" font-size="9.0" fill="#1a2226" text-anchor="end" font-family="Liberation Sans">0.000</text>
<rect x="789.3" y="536.3" width="39.40000000000009" height="4" rx="1.5" fill="#f4f4f4" stroke="#333" stroke-width="0.8"/>
<line x1="790.3" y1="539.0999999999999" x2="827.7" y2="539.0999999999999" stroke="#555" stroke-width="0.8" stroke-dasharray="1.2 1.3"/>
<text transform="translate(749.7,550.4) scale(0.8,1)" x="0" y="0" font-size="9.0" fill="#1a2226" text-anchor="start" font-family="Liberation Sans">D</text>
<text transform="translate(784.8,550.4) scale(0.8,1)" x="0" y="0" font-size="9.0" fill="#1a2226" text-anchor="end" font-family="Liberation Sans">16.40</text>
<rect x="789.3" y="545.5999999999999" width="39.40000000000009" height="4" rx="1.5" fill="#f4f4f4" stroke="#333" stroke-width="0.8"/>
<line x1="790.3" y1="548.3999999999999" x2="827.7" y2="548.3999999999999" stroke="#555" stroke-width="0.8" stroke-dasharray="1.2 1.3"/>
<ellipse cx="1042.4" cy="424.5" rx="5" ry="5.5" fill="#d00000"/>
<ellipse cx="796.4" cy="573.5" rx="6.5" ry="3.7" fill="#e00000"/>
<ellipse cx="1158" cy="617.5" rx="6.5" ry="3.3" fill="#e00000"/>
<ellipse cx="790.5" cy="620.4" rx="33" ry="15.6" fill="url(#gsmh)"/>
<path d="M757.5,620.4 A33,15.6 0 0 1 823.5,620.4 A33,12 0 0 0 757.5,620.4 Z" fill="#9a9d9f"/>
<ellipse cx="969" cy="604" rx="126" ry="57" fill="url(#gring)"/>
<ellipse cx="969" cy="585" rx="110" ry="50" fill="#a6aaab"/>
<path d="M899,560 Q965,538 1031,550 L1034,604 L899,604 Z" fill="url(#gring)"/>
<ellipse cx="968" cy="604" rx="66" ry="30" fill="#abaeb0"/>
<ellipse cx="969" cy="603" rx="46" ry="21" fill="url(#gring)"/>
<ellipse cx="969" cy="594" rx="34" ry="12" fill="#dfe1e3"/>
<g fill="none" stroke="#e2e4e6" stroke-width="0.9" opacity="0.85"><path d="M1043,663 L1060,645 L1108,649 L1091,668 Z M1043,663 L1073,675 L1108,649 M1060,645 L1073,675 M1050,655 L1100,659"/></g>
<text x="0" y="0" font-size="19" fill="none" stroke="#e2e4e6" stroke-width="0.9" font-family="Liberation Sans" transform="translate(1116,672) rotate(5) skewX(-25) scale(1,1.1)" textLength="132" lengthAdjust="spacing" opacity="0.85">HEXAGON</text>
<rect x="573" y="478" width="22" height="11" fill="#a4a7a9" stroke="#222" stroke-width="1"/><rect x="573" y="478" width="22" height="2.5" fill="#111"/>
<text x="574.5" y="487.5" font-size="8" fill="#222" font-family="Liberation Sans">PNT1</text>
<path d="M608,496 L606,456" stroke="#3a9a3a" stroke-width="3"/><path d="M601,463 L606,446 L611,463 Z" fill="#2e9a2e"/>
<path d="M608,496 L650,499" stroke="#d8282e" stroke-width="3"/><path d="M640,492 L660,499 L640,505 Z" fill="#d8282e"/>
<path d="M608,496 L620,480" stroke="#2c9cc0" stroke-width="3"/><path d="M614,480 L628,470 L624,487 Z" fill="#2c9cc0"/>
<text x="603" y="456" font-size="7" fill="#6fd06f" font-family="Liberation Sans">Y</text><text x="661" y="502" font-size="7" fill="#ff6060" font-family="Liberation Sans">X</text><text x="628" y="472" font-size="7" fill="#7fd7f0" font-family="Liberation Sans">Z</text>
<g stroke="#111" stroke-width="1.6" stroke-linejoin="round">
<path d="M381.4,673.1 L412.8,675.7 L403.6,690.1 L383.6,689.2 Z" fill="#3a9a98"/>
<path d="M372.2,686.6 L381.4,673.1 L383.6,689.2 L385.7,702.3 L373.1,717.2 Z" fill="#6b5a5f"/>
<path d="M383.6,689.2 L403.6,690.1 L415,704.5 L385.7,702.3 Z" fill="#3fa6c0"/>
<path d="M412.8,675.7 L415,704.5 L403.6,690.1 Z" fill="#5a9ab0"/>
<path d="M373.1,717.2 L385.7,702.3 L415,704.5 L405.8,718.5 Z" fill="#2e7a5a"/>
</g>
<path d="M372,717 L370.5,677" stroke="#6ac040" stroke-width="2"/><path d="M373,717 L416,720.5" stroke="#ff3b3b" stroke-width="2.5"/>
<text x="369" y="675" font-size="7" fill="#7ad04a" font-family="Liberation Sans">Y</text><text x="419" y="722" font-size="8" fill="#ff4040" font-family="Liberation Sans">X</text>
</g></svg>
<div id="tabs" class="a"></div>
<div id="cbar" class="a"></div>
<div class="a" style="left:316px;top:774px;width:1212px;height:4px;background:#fafafa"></div>
<div class="a" style="left:316px;top:778px;width:1213.5px;height:1.5px;background:#a0a0a0"></div>
<div class="a" style="left:316px;top:774px;width:76px;height:26px;background:#f0f0f0"></div>
<svg class="a" style="left:325px;top:783px" width="16" height="17" viewBox="0 0 16 17"><path d="M8 0.5L15.5 4.5V12.5L8 16.5L0.5 12.5V4.5Z" fill="#1a9ac0"/><path d="M8 2.8L13 5.5L8 8.2L3 5.5Z" fill="#fff"/></svg>
<div class="a" style="left:353px;top:786px;font-size:11px;font-weight:bold;color:#333;transform:scaleX(.9);transform-origin:0 0">CAD</div>
<div class="a" style="left:392px;top:778px;width:77px;height:23px;background:#e9e9e9;border:1px solid #a8a8a8;border-bottom:none"></div>
<svg class="a" style="left:401px;top:787px" width="16" height="11" viewBox="0 0 16 11"><rect x="0" y="0.5" width="11" height="10" rx="1" fill="#3a3a3a"/><path d="M11 5.5L16 1V10Z" fill="#3a3a3a"/></svg>
<div class="a" style="left:424px;top:786px;font-size:11px;font-weight:bold;color:#333;transform:scaleX(.9);transform-origin:0 0">VISION</div>
<div class="a" style="left:1528px;top:66px;width:1.5px;height:714px;background:#9a9a9a"></div>
<div class="a" style="left:1526px;top:69px;width:2px;height:711px;background:#fafafa"></div>
<div class="a" style="left:1531px;top:76.5px;width:20px;height:65.8px;background:#ff0000"></div>
<div class="a" style="left:1531px;top:142.2px;width:20px;height:65.8px;background:#9030c8"></div>
<div class="a" style="left:1531px;top:207.9px;width:20px;height:65.8px;background:#9a68c8"></div>
<div class="a" style="left:1531px;top:273.6px;width:20px;height:65.8px;background:#9c9cc8"></div>
<div class="a" style="left:1531px;top:339.3px;width:20px;height:65.8px;background:#98c6c6"></div>
<div class="a" style="left:1531px;top:405.0px;width:20px;height:65.8px;background:#98fc98"></div>
<div class="a" style="left:1531px;top:470.7px;width:20px;height:65.8px;background:#55fb66"></div>
<div class="a" style="left:1531px;top:536.4px;width:20px;height:65.8px;background:#33fc33"></div>
<div class="a" style="left:1531px;top:602.1px;width:20px;height:65.8px;background:#00cb66"></div>
<div class="a" style="left:1531px;top:667.8px;width:20px;height:65.8px;background:#006a60"></div>
<div class="a" style="left:1531px;top:733.5px;width:20px;height:65.8px;background:#ffff00"></div>
<div class="a" style="left:1532px;top:142.7px;font-size:6.5px;color:#222;opacity:.6;line-height:6px">0.100</div>
<div class="a" style="left:1532px;top:201.4px;font-size:6.5px;color:#222;opacity:.6;line-height:6px">0.089</div>
<div class="a" style="left:1532px;top:208.4px;font-size:6.5px;color:#222;opacity:.6;line-height:6px">0.089</div>
<div class="a" style="left:1532px;top:267.1px;font-size:6.5px;color:#222;opacity:.6;line-height:6px">0.078</div>
<div class="a" style="left:1532px;top:274.1px;font-size:6.5px;color:#222;opacity:.6;line-height:6px">0.078</div>
<div class="a" style="left:1532px;top:332.8px;font-size:6.5px;color:#222;opacity:.6;line-height:6px">0.067</div>
<div class="a" style="left:1532px;top:339.8px;font-size:6.5px;color:#222;opacity:.6;line-height:6px">0.067</div>
<div class="a" style="left:1532px;top:398.5px;font-size:6.5px;color:#222;opacity:.6;line-height:6px">0.056</div>
<div class="a" style="left:1532px;top:405.5px;font-size:6.5px;color:#222;opacity:.6;line-height:6px">0.056</div>
<div class="a" style="left:1532px;top:464.2px;font-size:6.5px;color:#222;opacity:.6;line-height:6px">0.044</div>
<div class="a" style="left:1532px;top:471.2px;font-size:6.5px;color:#222;opacity:.6;line-height:6px">0.044</div>
<div class="a" style="left:1532px;top:529.9px;font-size:6.5px;color:#222;opacity:.6;line-height:6px">0.033</div>
<div class="a" style="left:1532px;top:536.9px;font-size:6.5px;color:#222;opacity:.6;line-height:6px">0.033</div>
<div class="a" style="left:1532px;top:595.6px;font-size:6.5px;color:#222;opacity:.6;line-height:6px">0.022</div>
<div class="a" style="left:1532px;top:602.6px;font-size:6.5px;color:#222;opacity:.6;line-height:6px">0.022</div>
<div class="a" style="left:1532px;top:661.3px;font-size:6.5px;color:#222;opacity:.6;line-height:6px">0.011</div>
<div class="a" style="left:1532px;top:668.3px;font-size:6.5px;color:#222;opacity:.6;line-height:6px">0.011</div>
<div class="a" style="left:1532px;top:727.0px;font-size:6.5px;color:#222;opacity:.6;line-height:6px">0.000</div>
<div class="a" style="left:1532px;top:734.0px;font-size:6.5px;color:#222;opacity:.6;line-height:6px">0.000</div>
<div class="a" style="left:1532px;top:70px;width:10px;height:4px;border:1px solid #c4c4c4;background:#e8e8e8"></div>
<div class="a" style="left:1543.5px;top:65px;font-size:13px;font-weight:bold;color:#000;line-height:13px">&#215;</div>
<div class="row " style="top:114.9px">
<svg width="16" height="16" viewBox="0 0 16 16"><rect x="1" y="2" width="2" height="12" fill="#222"/><path d="M5 7h4V3.5L14 8l-5 4.5V9H5z" fill="#222"/></svg>
<div class="t">DCC Mode</div></div>
<div class="row " style="top:145.5px">
<svg width="16" height="16" viewBox="0 0 16 16"><path d="M2 2h5v5H2zM9 2h5v5H9zM2 9h5v5H2zM9 9h5v5H9z" fill="none" stroke="#333" stroke-width="1.4"/></svg>
<div class="t">Dimension Format</div></div>
<div class="row " style="top:176.1px">
<svg width="16" height="16" viewBox="0 0 16 16"><path d="M5 4.2A5.5 5.5 0 1 0 11 4.2" fill="none" stroke="#222" stroke-width="1.8"/><rect x="7.1" y="1.5" width="1.8" height="7" fill="#222"/></svg>
<div class="t">Load Probe - NEW5_BY_50</div></div>
<div class="row " style="top:206.7px">
<svg width="16" height="16" viewBox="0 0 16 16"><rect x="6.8" y="1.5" width="2.4" height="9" fill="#222"/><rect x="6.8" y="12" width="2.4" height="2.5" fill="#222"/></svg>
<div class="t">T1A0B0 = Set Active Tip</div></div>
<div class="row " style="top:237.3px">
<svg width="16" height="16" viewBox="0 0 16 16"><path d="M1.5 3.5h5l1.5 1.5h6v8.5h-12.5z" fill="none" stroke="#222" stroke-width="1.6"/><path d="M1.5 7h13" stroke="#222" stroke-width="1.4"/></svg>
<div class="t">GRP1 = Group</div></div>
<svg class="a" style="left:282px;top:245px" width="14" height="10" viewBox="0 0 14 10"><path d="M1 5Q7 -1 13 5Q7 11 1 5z" fill="none" stroke="#1a9ac0" stroke-width="1.5"/></svg>
<div class="row ind" style="top:267.9px">
<svg width="16" height="16" viewBox="0 0 16 16"><path d="M8 2l-3 3h2v6h2V5h2z" fill="#1a9ac0"/><rect x="1.5" y="12.5" width="13" height="2" fill="#1a9ac0"/></svg>
<div class="t">PLN1 = PLANE (CONTACT)</div></div>
<svg class="a" style="left:282px;top:276px" width="14" height="10" viewBox="0 0 14 10"><path d="M0.5 5Q7 -2 13.5 5Q7 12 0.5 5z" fill="#1a9ac0"/><circle cx="7" cy="5" r="2.6" fill="#eff0ee"/><circle cx="7" cy="5" r="1.4" fill="#1a9ac0"/><path d="M2 0.5L12 9.5" stroke="#eff0ee" stroke-width="2.6"/><path d="M2 0.5L12 9.5" stroke="#1a9ac0" stroke-width="1.3"/></svg>
<div class="row ind fade" style="top:298.5px">
<svg width="16" height="16" viewBox="0 0 16 16" opacity="0.35"><path d="M8 2l-3 3h2v6h2V5h2z" fill="#1a9ac0"/><rect x="1.5" y="12.5" width="13" height="2" fill="#1a9ac0"/></svg>
<div class="t">PLN2 = PLANE (CONTACT)</div></div>
<svg class="a" style="left:282px;top:306px" width="14" height="10" viewBox="0 0 14 10"><path d="M0.5 5Q7 -2 13.5 5Q7 12 0.5 5z" fill="#1a9ac0"/><circle cx="7" cy="5" r="2.6" fill="#eff0ee"/><circle cx="7" cy="5" r="1.4" fill="#1a9ac0"/></svg>
<div class="row ind" style="top:329.1px">
<svg width="16" height="16" viewBox="0 0 16 16"><path d="M8 1l-2.5 3h1.7v6h1.6V4h1.7z" fill="#1a9ac0"/><circle cx="8" cy="12.5" r="2.3" fill="#1a9ac0"/></svg>
<div class="t">PNT1 = VECTOR POINT (CONTA(</div></div>
<svg class="a" style="left:282px;top:337px" width="14" height="10" viewBox="0 0 14 10"><path d="M0.5 5Q7 -2 13.5 5Q7 12 0.5 5z" fill="#1a9ac0"/><circle cx="7" cy="5" r="2.6" fill="#eff0ee"/><circle cx="7" cy="5" r="1.4" fill="#1a9ac0"/></svg>
<div class="row " style="top:359.7px">
<svg width="16" height="16" viewBox="0 0 16 16"><circle cx="10" cy="6" r="4" fill="none" stroke="#222" stroke-width="1.8"/><path d="M2 14l6-6M2 14h4M2 14v-4" stroke="#222" stroke-width="1.8" fill="none"/></svg>
<div class="t">A1 = Start Alignment</div></div>
<div class="row sel" style="top:390.3px">
<svg width="16" height="16" viewBox="0 0 16 16"><rect x="1.5" y="1.5" width="13" height="13" rx="1.5" fill="#5ab8d2"/><circle cx="8" cy="8" r="5" fill="#0a98bf"/></svg>
<div class="t">CIR1 = CIRCLE (CONTACT)</div></div>
<svg class="a" style="left:282px;top:398px" width="14" height="10" viewBox="0 0 14 10"><path d="M0.5 5Q7 -2 13.5 5Q7 12 0.5 5z" fill="#1a9ac0"/><circle cx="7" cy="5" r="2.6" fill="#eff0ee"/><circle cx="7" cy="5" r="1.4" fill="#1a9ac0"/></svg>
<div class="row " style="top:420.9px">
<svg width="16" height="16" viewBox="0 0 16 16"><path d="M2 5.5V2h3.5M10.5 2H14v3.5M14 10.5V14h-3.5M5.5 14H2v-3.5M8 1v14M1 8h14" fill="none" stroke="#d9363e" stroke-width="1.5"/></svg>
<div class="t">LOC1 Passed : CIR1</div></div>
<div class="row " style="top:451.5px">
<svg width="16" height="16" viewBox="0 0 16 16"><path d="M2 4h9M2 8h9M5 1.5v10M9 1.5v10" stroke="#333" stroke-width="1.3" fill="none"/><circle cx="12.5" cy="12.5" r="3" fill="#1a9ac0"/></svg>
<div class="t">Dimension Information</div></div>
<svg class="a" style="left:282px;top:460px" width="14" height="10" viewBox="0 0 14 10"><path d="M0.5 5Q7 -2 13.5 5Q7 12 0.5 5z" fill="#1a9ac0"/><circle cx="7" cy="5" r="2.6" fill="#eff0ee"/><circle cx="7" cy="5" r="1.4" fill="#1a9ac0"/></svg>
<div class="row " style="top:482.1px">
<svg width="16" height="16" viewBox="0 0 16 16"><rect x="1" y="1" width="14" height="14" rx="1.5" fill="#1a9ac0"/><circle cx="8" cy="8" r="5.2" fill="#e8f4f8"/></svg>
<div class="t">CIR2 = CIRCLE (CONTACT)</div></div>
<svg class="a" style="left:282px;top:490px" width="14" height="10" viewBox="0 0 14 10"><path d="M0.5 5Q7 -2 13.5 5Q7 12 0.5 5z" fill="#1a9ac0"/><circle cx="7" cy="5" r="2.6" fill="#eff0ee"/><circle cx="7" cy="5" r="1.4" fill="#1a9ac0"/></svg>
<div class="row " style="top:512.7px">
<div class="bar" style="background:#6b9b37"></div>
<svg width="16" height="16" viewBox="0 0 16 16"><circle cx="8" cy="8" r="6" fill="none" stroke="#d9363e" stroke-width="1.5"/></svg>
<div class="t">FCFCIRTY2 Passed : CIR2</div></div>
<div class="row " style="top:543.3px">
<div class="bar" style="background:#c43a31"></div>
<svg width="16" height="16" viewBox="0 0 16 16"><path d="M2 5.5V2h3.5M10.5 2H14v3.5M14 10.5V14h-3.5M5.5 14H2v-3.5M8 1v14M1 8h14" fill="none" stroke="#d9363e" stroke-width="1.5"/></svg>
<div class="t">LOC2 *OUTTOL* : CIR2</div></div>
<div class="row " style="top:573.9px">
<svg width="16" height="16" viewBox="0 0 16 16"><path d="M2 4h9M2 8h9M5 1.5v10M9 1.5v10" stroke="#333" stroke-width="1.3" fill="none"/><circle cx="12.5" cy="12.5" r="3" fill="#1a9ac0"/></svg>
<div class="t">Dimension Information</div></div>
<svg class="a" style="left:282px;top:582px" width="14" height="10" viewBox="0 0 14 10"><path d="M0.5 5Q7 -2 13.5 5Q7 12 0.5 5z" fill="#1a9ac0"/><circle cx="7" cy="5" r="2.6" fill="#eff0ee"/><circle cx="7" cy="5" r="1.4" fill="#1a9ac0"/></svg>
<div class="row " style="top:604.5px">
<svg width="16" height="16" viewBox="0 0 16 16"><rect x="1" y="1" width="14" height="14" rx="1.5" fill="#1a9ac0"/><circle cx="8" cy="8" r="5.2" fill="#e8f4f8"/></svg>
<div class="t">CIR3 = CIRCLE (CONTACT)</div></div>
<svg class="a" style="left:282px;top:612px" width="14" height="10" viewBox="0 0 14 10"><path d="M0.5 5Q7 -2 13.5 5Q7 12 0.5 5z" fill="#1a9ac0"/><circle cx="7" cy="5" r="2.6" fill="#eff0ee"/><circle cx="7" cy="5" r="1.4" fill="#1a9ac0"/><path d="M2 0.5L12 9.5" stroke="#eff0ee" stroke-width="2.6"/><path d="M2 0.5L12 9.5" stroke="#1a9ac0" stroke-width="1.3"/></svg>
<div class="row " style="top:635.1px">
<div class="bar" style="background:#6b9b37"></div>
<svg width="16" height="16" viewBox="0 0 16 16"><circle cx="8" cy="8" r="6" fill="none" stroke="#d9363e" stroke-width="1.5"/></svg>
<div class="t">FCFCIRTY1 Passed : CIR3</div></div>
<div class="row fade" style="top:665.7px">
<svg width="16" height="16" viewBox="0 0 16 16" opacity="0.35"><rect x="1" y="1" width="14" height="14" rx="1.5" fill="#1a9ac0"/><circle cx="8" cy="8" r="5.2" fill="#e8f4f8"/></svg>
<div class="t">CIR4 = CIRCLE (CONTACT)</div></div>
<svg class="a" style="left:282px;top:674px" width="14" height="10" viewBox="0 0 14 10"><path d="M0.5 5Q7 -2 13.5 5Q7 12 0.5 5z" fill="#1a9ac0"/><circle cx="7" cy="5" r="2.6" fill="#eff0ee"/><circle cx="7" cy="5" r="1.4" fill="#1a9ac0"/></svg>
<div class="row fade" style="top:696.3px">
<svg width="16" height="16" viewBox="0 0 16 16" opacity="0.35"><rect x="1" y="1" width="14" height="14" rx="1.5" fill="#1a9ac0"/><circle cx="8" cy="8" r="5.2" fill="#e8f4f8"/></svg>
<div class="t">CIR5 = CIRCLE (CONTACT)</div></div>
<svg class="a" style="left:282px;top:704px" width="14" height="10" viewBox="0 0 14 10"><path d="M0.5 5Q7 -2 13.5 5Q7 12 0.5 5z" fill="#1a9ac0"/><circle cx="7" cy="5" r="2.6" fill="#eff0ee"/><circle cx="7" cy="5" r="1.4" fill="#1a9ac0"/></svg>
<div class="row " style="top:726.9px">
<div class="bar" style="background:#c43a31"></div>
<svg width="16" height="16" viewBox="0 0 16 16"><path d="M2 5.5V2h3.5M10.5 2H14v3.5M14 10.5V14h-3.5M5.5 14H2v-3.5M8 1v14M1 8h14" fill="none" stroke="#d9363e" stroke-width="1.5"/></svg>
<div class="t">LOC3 *OUTTOL* : CIR5</div></div>
<div class="row " style="top:757.5px">
<svg width="16" height="16" viewBox="0 0 16 16"><path d="M2 4h9M2 8h9M5 1.5v10M9 1.5v10" stroke="#333" stroke-width="1.3" fill="none"/><circle cx="12.5" cy="12.5" r="3" fill="#1a9ac0"/></svg>
<div class="t">Dimension Information</div></div>
<svg class="a" style="left:282px;top:766px" width="14" height="10" viewBox="0 0 14 10"><path d="M0.5 5Q7 -2 13.5 5Q7 12 0.5 5z" fill="#1a9ac0"/><circle cx="7" cy="5" r="2.6" fill="#eff0ee"/><circle cx="7" cy="5" r="1.4" fill="#1a9ac0"/></svg>
<div class="row " style="top:788.1px">
<svg width="16" height="16" viewBox="0 0 16 16"><rect x="1" y="1" width="14" height="14" rx="1.5" fill="#1a9ac0"/><circle cx="8" cy="8" r="5.2" fill="#e8f4f8"/></svg>
<div class="t">CIR6 = CIRCLE (CONTACT)</div></div>
<svg class="a" style="left:282px;top:796px" width="14" height="10" viewBox="0 0 14 10"><path d="M0.5 5Q7 -2 13.5 5Q7 12 0.5 5z" fill="#1a9ac0"/><circle cx="7" cy="5" r="2.6" fill="#eff0ee"/><circle cx="7" cy="5" r="1.4" fill="#1a9ac0"/></svg>
<svg class="a" style="left:23px;top:397px" width="15" height="11" viewBox="0 0 15 11"><path d="M0 0h10l5 5.5-5 5.5H0z" fill="#0a98bf"/></svg>
<svg class="a" style="left:11px;top:248px" width="8" height="5" viewBox="0 0 8 5"><path d="M0 0h8L4 5z" fill="#1a9ac0"/></svg>
<div class="a" style="left:249.5px;top:121.5px;width:22.5px;height:11.5px;border-radius:6px;background:#1a9ac0"></div><div class="a" style="left:262.5px;top:123px;width:8.5px;height:8.5px;border-radius:50%;background:#fff"></div>
<div class="a" style="left:307px;top:159px;width:2px;height:578px;background:#8a8a8a"></div>
<div class="a" style="left:312px;top:66px;width:4px;height:734px;background:#f6f6f6"></div>
<div class="a" style="left:301.5px;top:66px;font-size:12px;font-weight:bold;color:#111;line-height:14px">&#215;</div>
<svg class="a" style="left:290.5px;top:85.5px" width="14" height="14" viewBox="0 0 14 14"><circle cx="7" cy="7" r="4.6" fill="#1a1a1a"/><path d="M7.00,3.50 L7.00,0.80 M10.03,5.25 L12.37,3.90 M10.03,8.75 L12.37,10.10 M7.00,10.50 L7.00,13.20 M3.97,8.75 L1.63,10.10 M3.97,5.25 L1.63,3.90 " stroke="#1a1a1a" stroke-width="2.8"/><circle cx="7" cy="7" r="1.4" fill="#eff0ee"/></svg>
<div class="a" style="left:0;top:800px;width:1556px;height:2px;background:#fff"></div>
</div></body></html>
